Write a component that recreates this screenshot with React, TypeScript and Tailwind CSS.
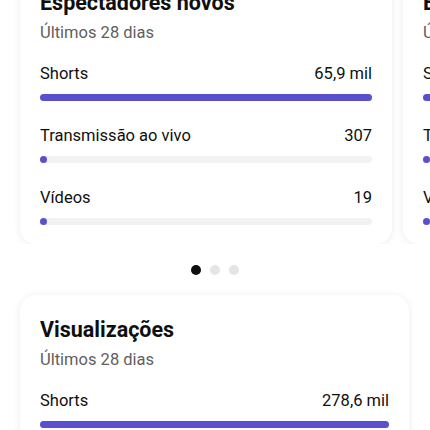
import React from "react";

type Row = { label: string; value: string; pct: number };

const Bar = ({ pct }: { pct: number }) => (
  <div className="mt-[8px] h-[7px] w-full rounded-full bg-[#f2f2f2]">
    <div
      className="h-full rounded-full bg-[#5a4fcf]"
      style={{ width: `max(${pct}%, 7px)` }}
    />
  </div>
);

const StatCard = ({
  title,
  rows,
  className,
}: {
  title: string;
  rows: Row[];
  className: string;
}) => (
  <div
    className={`shrink-0 rounded-2xl bg-white px-5 pt-5 pb-[19px] shadow-[0_1px_8px_rgba(0,0,0,0.08)] ${className}`}
  >
    <div className="text-[21.5px] leading-[29px] font-bold text-[#0f0f0f]">{title}</div>
    <div className="mt-[4px] text-[16.5px] leading-[24px] text-[#606060]">Últimos 28 dias</div>
    <div className="mt-[17px] flex flex-col gap-[23px]">
      {rows.map((r) => (
        <div key={r.label}>
          <div className="flex items-center justify-between text-[16.5px] leading-[24px] text-[#0f0f0f]">
            <span>{r.label}</span>
            <span className="font-normal">{r.value}</span>
          </div>
          <Bar pct={r.pct} />
        </div>
      ))}
    </div>
  </div>
);

const newViewers: Row[] = [
  { label: "Shorts", value: "65,9 mil", pct: 100 },
  { label: "Transmissão ao vivo", value: "307", pct: 0.5 },
  { label: "Vídeos", value: "19", pct: 0 },
];

const returning: Row[] = [
  { label: "Shorts", value: "12,4 mil", pct: 100 },
  { label: "Transmissão ao vivo", value: "58", pct: 0.5 },
  { label: "Vídeos", value: "6", pct: 0 },
];

const views: Row[] = [
  { label: "Shorts", value: "278,6 mil", pct: 100 },
  { label: "Transmissão ao vivo", value: "1,2 mil", pct: 0.4 },
  { label: "Vídeos", value: "84", pct: 0 },
];

export default function App() {
  return (
    <div className="h-[430px] w-[430px] overflow-hidden bg-white font-['Roboto',sans-serif]">
      <div className="-mt-[32px]">
        <div className="flex gap-[11px] overflow-hidden pl-5 pb-0">
          <StatCard title="Espectadores novos" rows={newViewers} className="w-[372px]" />
          <StatCard title="Espectadores recorrentes" rows={returning} className="w-[372px]" />
        </div>
        <div className="mt-[21px] flex justify-center gap-[9px]">
          <span className="h-[10px] w-[10px] rounded-full bg-[#0f0f0f]" />
          <span className="h-[10px] w-[10px] rounded-full bg-[#e5e5e5]" />
          <span className="h-[10px] w-[10px] rounded-full bg-[#e5e5e5]" />
        </div>
        <div className="mt-[20px] pl-5 pr-[21px]">
          <StatCard title="Visualizações" rows={views} className="w-full" />
        </div>
      </div>
    </div>
  );
}
